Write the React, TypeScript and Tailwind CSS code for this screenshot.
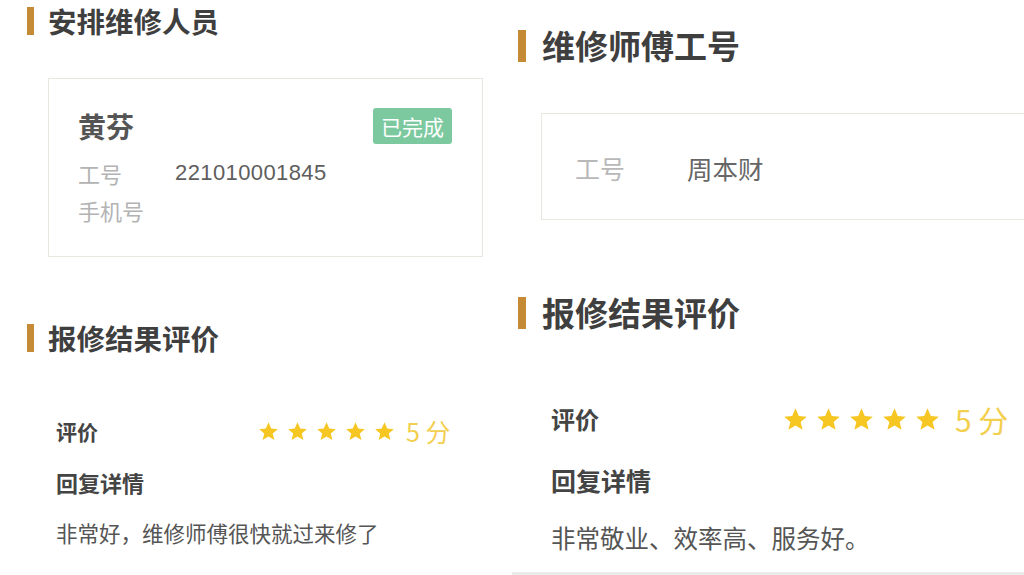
function Star({ size }: { size: number }) {
  return (
    <svg width={size} height={size} viewBox="1.5 1.5 21 21" className="shrink-0">
      <path
        d="M12 1.8l3 7 7.3.6-5.6 4.8 1.8 7.2L12 17.5l-6.5 3.9 1.8-7.2-5.6-4.8 7.3-.6z"
        fill="#f6c623"
      />
    </svg>
  );
}

function Title({ text, big }: { text: string; big?: boolean }) {
  if (big) {
    return (
      <div className="flex items-center h-[44px]">
        <div className="ml-[6px] w-[8px] h-[32px] bg-[#c48a36]" />
        <div className="ml-[16px] text-[33px] leading-[1.2] font-bold text-[#3f3f3f]">{text}</div>
      </div>
    );
  }
  return (
    <div className="flex items-center h-[38px]">
      <div className="ml-[27px] w-[7px] h-[28px] bg-[#c48a36]" />
      <div className="ml-[14px] text-[28.5px] leading-[1.2] font-bold text-[#3f3f3f]">{text}</div>
    </div>
  );
}

function LeftPanel() {
  return (
    <div className="w-[512px] h-[575px] shrink-0 flex flex-col pt-[2px]">
      <Title text="安排维修人员" />

      <div className="mt-[38px] ml-[48px] w-[435px] h-[179px] border-[1.5px] border-[#e9e7e0] pl-[29px] pr-[30px] pt-[29px]">
        <div className="flex items-center justify-between h-[36px]">
          <span className="text-[28px] leading-none font-bold text-[#555]">黄芬</span>
          <span className="w-[79px] h-[36px] rounded-[3px] bg-[#7cc9a0] text-white text-[21px] leading-none flex items-center justify-center">
            已完成
          </span>
        </div>
        <div className="mt-[10px] flex items-center h-[37px]">
          <span className="w-[97px] text-[22px] leading-none text-[#b3b3b3]">工号</span>
          <span className="text-[22px] leading-none text-[#5e5e5e] font-['Liberation_Sans','Noto_Sans',sans-serif] tracking-[0.4px]">
            221010001845
          </span>
        </div>
        <div className="flex items-center h-[37px]">
          <span className="text-[22px] leading-none text-[#b3b3b3]">手机号</span>
        </div>
      </div>

      <div className="mt-[62px]">
        <Title text="报修结果评价" />
      </div>

      <div className="mt-[54px] ml-[56px] flex items-center h-[40px]">
        <span className="w-[203px] text-[21px] leading-none font-bold text-[#444]">评价</span>
        <div className="flex items-center gap-[10px]">
          <Star size={19} />
          <Star size={19} />
          <Star size={19} />
          <Star size={19} />
          <Star size={19} />
        </div>
        <span className="ml-[12px] text-[25px] leading-none text-[#f3cf4f]">5 分</span>
      </div>
      <div className="mt-[11px] ml-[56px] flex items-center h-[40px]">
        <span className="text-[22px] leading-none font-bold text-[#444]">回复详情</span>
      </div>
      <div className="mt-[11px] ml-[56px] flex items-center h-[40px]">
        <span className="text-[21.5px] leading-none text-[#555]">非常好，维修师傅很快就过来修了</span>
      </div>
    </div>
  );
}

function RightPanel() {
  return (
    <div className="w-[512px] h-[575px] shrink-0 flex flex-col overflow-hidden">
      <div className="pt-[24px]">
        <Title text="维修师傅工号" big />
      </div>

      <div className="mt-[45px] ml-[29px] w-[600px] h-[107px] shrink-0 border-[1.5px] border-[#e9e7e0] pl-[33px] pt-[3px] flex items-center">
        <span className="w-[112px] text-[25px] leading-none text-[#b8b8b8]">工号</span>
        <span className="text-[25.5px] leading-none text-[#666]">周本财</span>
      </div>

      <div className="mt-[71px]">
        <Title text="报修结果评价" big />
      </div>

      <div className="mt-[62px] ml-[39px] flex items-center h-[44px]">
        <span className="w-[233px] text-[24px] leading-none font-bold text-[#444]">评价</span>
        <div className="flex items-center gap-[10px]">
          <Star size={23} />
          <Star size={23} />
          <Star size={23} />
          <Star size={23} />
          <Star size={23} />
        </div>
        <span className="ml-[16px] text-[30px] leading-none text-[#f3cf4f]">5 分</span>
      </div>
      <div className="mt-[17px] ml-[39px] flex items-center h-[44px]">
        <span className="text-[25px] leading-none font-bold text-[#444]">回复详情</span>
      </div>
      <div className="mt-[14px] ml-[39px] flex items-center h-[44px]">
        <span className="text-[24.5px] leading-none text-[#555]">非常敬业、效率高、服务好。</span>
      </div>

      <div className="mt-auto h-[3px] bg-[#ebebeb]" />
    </div>
  );
}

export default function App() {
  return (
    <div className="w-[1024px] h-[575px] bg-white flex overflow-hidden font-['Noto_Sans_CJK_SC','Noto_Sans',sans-serif]">
      <LeftPanel />
      <RightPanel />
    </div>
  );
}
